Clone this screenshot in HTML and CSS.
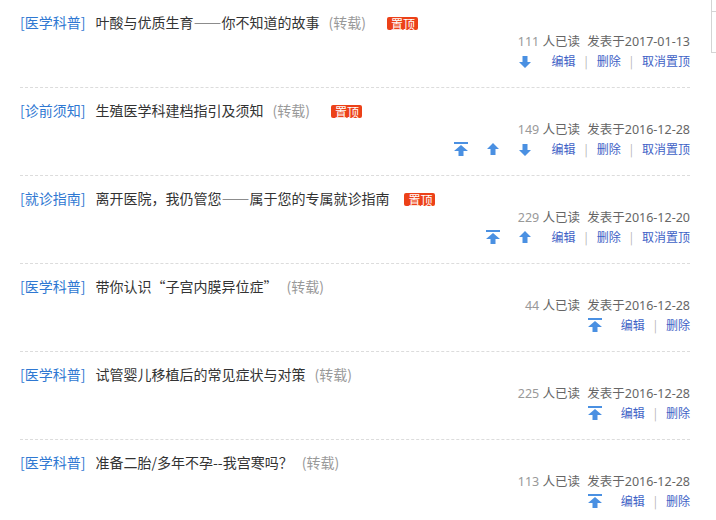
FILE: index.html
```html
<!DOCTYPE html>
<html lang="zh-CN">
<head>
  <meta charset="UTF-8">
  <meta name="viewport" content="width=device-width, initial-scale=1.0">
  <title>文章管理</title>
  <link rel="stylesheet" href="styles.css">
</head>
<body>
  <svg class="defs" width="0" height="0">
    <symbol id="i-top" viewBox="0 0 14 14">
      <rect x="0" y="0" width="14" height="2"/>
      <polygon points="7,3 14,9 9.5,9 9.5,14 4.5,14 4.5,9 0,9"/>
    </symbol>
    <symbol id="i-up" viewBox="0 0 14 14">
      <polygon points="7,1 13,7 9.5,7 9.5,13 4.5,13 4.5,7 1,7"/>
    </symbol>
    <symbol id="i-down" viewBox="0 0 14 14">
      <polygon points="7,14 13,8 9.5,8 9.5,2 4.5,2 4.5,8 1,8"/>
    </symbol>
  </svg>

  <div class="side-box"><div class="side-inner"></div></div>

  <div class="post-list">
    <div class="post">
      <div class="post-title">
        <a class="cat" href="#">[医学科普]</a>
        <a class="title" href="#">叶酸与优质生育——你不知道的故事</a>
        <span class="repost">(转载)</span>
        <span class="badge">置顶</span>
      </div>
      <div class="post-meta"><span class="reads">111</span> 人已读 <span class="date">发表于2017-01-13</span></div>
      <div class="post-actions">
        <span class="moves">
          <svg class="ico"><use href="#i-down"/></svg>
        </span>
        <a href="#">编辑</a><span class="sep">|</span><a href="#">删除</a><span class="sep">|</span><a href="#">取消置顶</a>
      </div>
    </div>

    <div class="post">
      <div class="post-title">
        <a class="cat" href="#">[诊前须知]</a>
        <a class="title" href="#">生殖医学科建档指引及须知</a>
        <span class="repost">(转载)</span>
        <span class="badge">置顶</span>
      </div>
      <div class="post-meta"><span class="reads">149</span> 人已读 <span class="date">发表于2016-12-28</span></div>
      <div class="post-actions">
        <span class="moves">
          <svg class="ico"><use href="#i-top"/></svg>
          <svg class="ico"><use href="#i-up"/></svg>
          <svg class="ico"><use href="#i-down"/></svg>
        </span>
        <a href="#">编辑</a><span class="sep">|</span><a href="#">删除</a><span class="sep">|</span><a href="#">取消置顶</a>
      </div>
    </div>

    <div class="post">
      <div class="post-title">
        <a class="cat" href="#">[就诊指南]</a>
        <a class="title" href="#">离开医院，我仍管您——属于您的专属就诊指南</a>
        <span class="badge">置顶</span>
      </div>
      <div class="post-meta"><span class="reads">229</span> 人已读 <span class="date">发表于2016-12-20</span></div>
      <div class="post-actions">
        <span class="moves">
          <svg class="ico"><use href="#i-top"/></svg>
          <svg class="ico"><use href="#i-up"/></svg>
        </span>
        <a href="#">编辑</a><span class="sep">|</span><a href="#">删除</a><span class="sep">|</span><a href="#">取消置顶</a>
      </div>
    </div>

    <div class="post">
      <div class="post-title">
        <a class="cat" href="#">[医学科普]</a>
        <a class="title" href="#">带你认识“子宫内膜异位症”</a>
        <span class="repost">(转载)</span>
      </div>
      <div class="post-meta"><span class="reads">44</span> 人已读 <span class="date">发表于2016-12-28</span></div>
      <div class="post-actions">
        <span class="moves">
          <svg class="ico"><use href="#i-top"/></svg>
        </span>
        <a href="#">编辑</a><span class="sep">|</span><a href="#">删除</a>
      </div>
    </div>

    <div class="post">
      <div class="post-title">
        <a class="cat" href="#">[医学科普]</a>
        <a class="title" href="#">试管婴儿移植后的常见症状与对策</a>
        <span class="repost">(转载)</span>
      </div>
      <div class="post-meta"><span class="reads">225</span> 人已读 <span class="date">发表于2016-12-28</span></div>
      <div class="post-actions">
        <span class="moves">
          <svg class="ico"><use href="#i-top"/></svg>
        </span>
        <a href="#">编辑</a><span class="sep">|</span><a href="#">删除</a>
      </div>
    </div>

    <div class="post">
      <div class="post-title">
        <a class="cat" href="#">[医学科普]</a>
        <a class="title" href="#">准备二胎/多年不孕--我宫寒吗？</a>
        <span class="repost">(转载)</span>
      </div>
      <div class="post-meta"><span class="reads">113</span> 人已读 <span class="date">发表于2016-12-28</span></div>
      <div class="post-actions">
        <span class="moves">
          <svg class="ico"><use href="#i-top"/></svg>
        </span>
        <a href="#">编辑</a><span class="sep">|</span><a href="#">删除</a>
      </div>
    </div>
  </div>
</body>
</html>
```

FILE: styles.css
```css
body {
  margin: 0;
  padding: 0;
  background: #fff;
  font-family: "Noto Sans CJK SC", "Noto Sans", sans-serif;
  color: #333;
}
a {
  text-decoration: none;
}
.defs {
  position: absolute;
  width: 0;
  height: 0;
}
.side-box {
  position: absolute;
  top: -1px;
  left: 711px;
  width: 20px;
  height: 52px;
  border: 1px solid #d4d4d4;
}
.side-inner {
  margin-top: 11px;
  border-top: 1px solid #d4d4d4;
}
.post-list {
  padding: 0 26px 0 20px;
}
.post {
  padding: 12px 0 17px;
  border-bottom: 1px dashed #dcdcdc;
}
.post-title {
  display: flex;
  align-items: center;
  height: 20px;
  font-size: 14px;
  line-height: 20px;
  white-space: nowrap;
}
.cat {
  color: #2f78d2;
  margin-right: 10px;
}
.title {
  color: #333;
}
.repost {
  color: #999;
  margin-left: 9px;
}
.badge {
  display: inline-block;
  margin-left: 21px;
  margin-top: 2px;
  padding: 0 3px 0 4px;
  height: 13px;
  line-height: 13px;
  font-size: 12px;
  color: #fff;
  background: #ec4118;
  border-radius: 2px;
}
.title + .badge {
  margin-left: 15px;
}
.post-meta {
  text-align: right;
  font-family: "Noto Sans", "Noto Sans CJK SC", sans-serif;
  font-size: 12.5px;
  line-height: 19px;
  color: #666;
}
.reads {
  color: #999;
}
.date {
  margin-left: 4px;
}
.post-actions {
  display: flex;
  justify-content: flex-end;
  align-items: center;
  height: 19px;
  font-size: 12px;
  line-height: 19px;
}
.post-actions a {
  color: #3e62c6;
}
.moves {
  display: flex;
  gap: 18px;
  margin-right: 19px;
}
.ico {
  width: 14px;
  height: 14px;
  fill: #4a90e2;
}
.sep {
  color: #b5b5b5;
  margin: 0 9px;
}
```
